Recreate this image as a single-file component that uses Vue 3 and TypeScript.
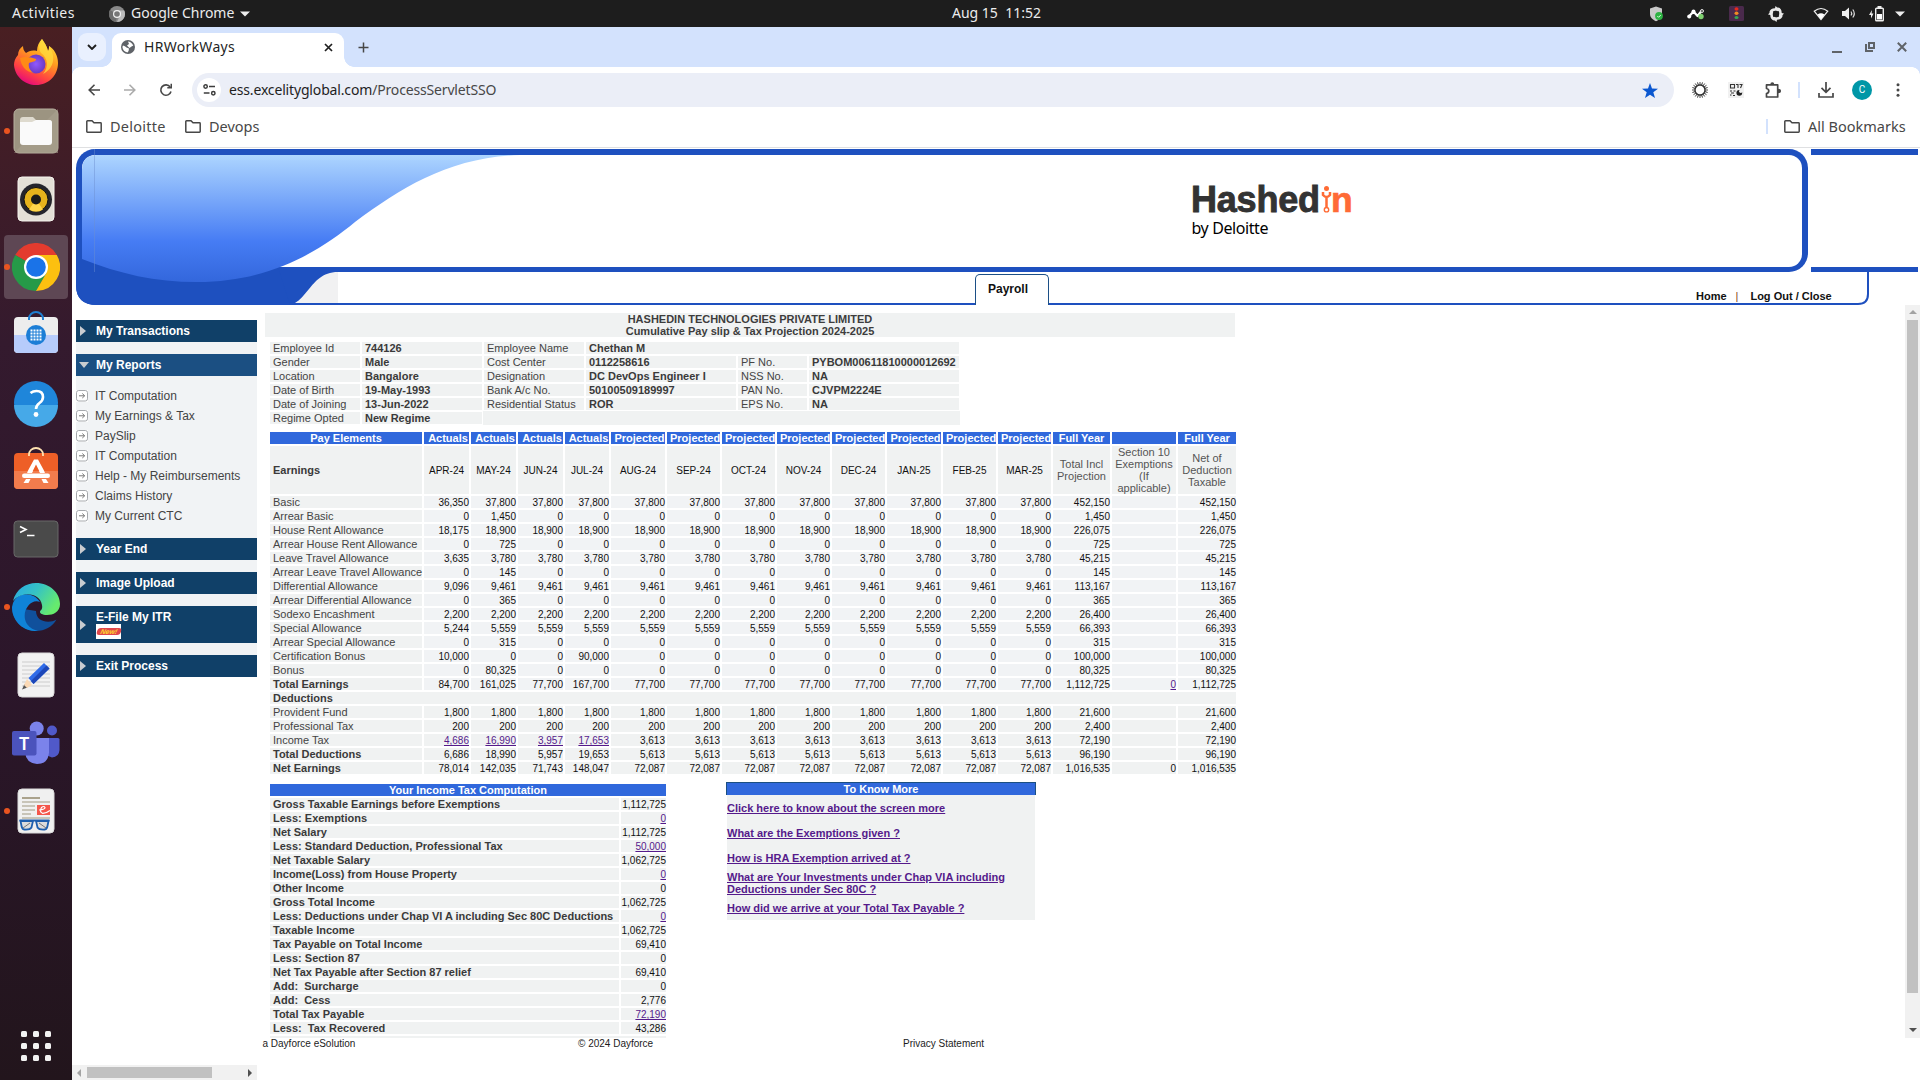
<script setup lang="ts">
interface PayRow {
  label: string
  actuals: number[]
  projected: number
  total: number
  exempt?: number
  bold?: boolean
  linkActuals?: boolean
  linkExempt?: boolean
}
interface TaxRow {
  label: string
  value: number
  link?: boolean
}

const fmt = (n: number): string => n.toLocaleString('en-US')

const months: string[] = [
  'APR-24', 'MAY-24', 'JUN-24', 'JUL-24', 'AUG-24', 'SEP-24',
  'OCT-24', 'NOV-24', 'DEC-24', 'JAN-25', 'FEB-25', 'MAR-25',
]

const earnings: PayRow[] = [
  { label: 'Basic', actuals: [36350, 37800, 37800, 37800], projected: 37800, total: 452150 },
  { label: 'Arrear Basic', actuals: [0, 1450, 0, 0], projected: 0, total: 1450 },
  { label: 'House Rent Allowance', actuals: [18175, 18900, 18900, 18900], projected: 18900, total: 226075 },
  { label: 'Arrear House Rent Allowance', actuals: [0, 725, 0, 0], projected: 0, total: 725 },
  { label: 'Leave Travel Allowance', actuals: [3635, 3780, 3780, 3780], projected: 3780, total: 45215 },
  { label: 'Arrear Leave Travel Allowance', actuals: [0, 145, 0, 0], projected: 0, total: 145 },
  { label: 'Differential Allowance', actuals: [9096, 9461, 9461, 9461], projected: 9461, total: 113167 },
  { label: 'Arrear Differential Allowance', actuals: [0, 365, 0, 0], projected: 0, total: 365 },
  { label: 'Sodexo Encashment', actuals: [2200, 2200, 2200, 2200], projected: 2200, total: 26400 },
  { label: 'Special Allowance', actuals: [5244, 5559, 5559, 5559], projected: 5559, total: 66393 },
  { label: 'Arrear Special Allowance', actuals: [0, 315, 0, 0], projected: 0, total: 315 },
  { label: 'Certification Bonus', actuals: [10000, 0, 0, 90000], projected: 0, total: 100000 },
  { label: 'Bonus', actuals: [0, 80325, 0, 0], projected: 0, total: 80325 },
  { label: 'Total Earnings', actuals: [84700, 161025, 77700, 167700], projected: 77700, total: 1112725, exempt: 0, bold: true, linkExempt: true },
]

const deductions: PayRow[] = [
  { label: 'Provident Fund', actuals: [1800, 1800, 1800, 1800], projected: 1800, total: 21600 },
  { label: 'Professional Tax', actuals: [200, 200, 200, 200], projected: 200, total: 2400 },
  { label: 'Income Tax', actuals: [4686, 16990, 3957, 17653], projected: 3613, total: 72190, linkActuals: true },
  { label: 'Total Deductions', actuals: [6686, 18990, 5957, 19653], projected: 5613, total: 96190, bold: true },
  { label: 'Net Earnings', actuals: [78014, 142035, 71743, 148047], projected: 72087, total: 1016535, exempt: 0, bold: true },
]

const taxRows: TaxRow[] = [
  { label: 'Gross Taxable Earnings before Exemptions', value: 1112725 },
  { label: 'Less: Exemptions', value: 0, link: true },
  { label: 'Net Salary', value: 1112725 },
  { label: 'Less: Standard Deduction, Professional Tax', value: 50000, link: true },
  { label: 'Net Taxable Salary', value: 1062725 },
  { label: 'Income(Loss) from House Property', value: 0, link: true },
  { label: 'Other Income', value: 0 },
  { label: 'Gross Total Income', value: 1062725 },
  { label: 'Less: Deductions under Chap VI A including Sec 80C Deductions', value: 0, link: true },
  { label: 'Taxable Income', value: 1062725 },
  { label: 'Tax Payable on Total Income', value: 69410 },
  { label: 'Less: Section 87', value: 0 },
  { label: 'Net Tax Payable after Section 87 relief', value: 69410 },
  { label: 'Add:\u00a0 Surcharge', value: 0 },
  { label: 'Add:\u00a0 Cess', value: 2776 },
  { label: 'Total Tax Payable', value: 72190, link: true },
  { label: 'Less:\u00a0 Tax Recovered', value: 43286 },
]

const reports: string[] = [
  'IT Computation', 'My Earnings & Tax', 'PaySlip', 'IT Computation',
  'Help - My Reimbursements', 'Claims History', 'My Current CTC',
]

const infoRows: string[][] = [
  ['Gender', 'Male', 'Cost Center', '0112258616', 'PF No.', 'PYBOM00611810000012692'],
  ['Location', 'Bangalore', 'Designation', 'DC DevOps Engineer I', 'NSS No.', 'NA'],
  ['Date of Birth', '19-May-1993', 'Bank A/c No.', '50100509189997', 'PAN No.', 'CJVPM2224E'],
  ['Date of Joining', '13-Jun-2022', 'Residential Status', 'ROR', 'EPS No.', 'NA'],
]

const helpLinks: string[] = [
  'Click here to know about the screen more',
  'What are the Exemptions given ?',
  'How is HRA Exemption arrived at ?',
  'What are Your Investments under Chap VIA including Deductions under Sec 80C ?',
  'How did we arrive at your Total Tax Payable ?',
]

const rays: number[] = Array.from({ length: 20 }, (_, i) => i * 18)
</script>

<template>
  <div class="desktop">
    <!-- system bar -->
    <div class="topbar">
      <span class="ui activities">Activities</span>
      <svg class="tb-chrome" width="16" height="16" viewBox="0 0 16 16">
        <circle cx="8" cy="8" r="8" fill="#8a8a8a" />
        <path d="M8 8L1 4A8 8 0 0 0 7 16Z" fill="#6d6d6d" />
        <path d="M8 4.5H15.2A8 8 0 0 1 8 16L11 9.500Z" fill="#b9b9b9" />
        <circle cx="8" cy="8" r="4" fill="#f2f2f2" />
        <circle cx="8" cy="8" r="2.800" fill="#777" />
      </svg>
      <span class="ui appname">Google Chrome</span>
      <svg class="caret" width="10" height="6" viewBox="0 0 10 6"><path d="M0 .5H10L5 5.500Z" fill="#eee" /></svg>
      <span class="ui clock">Aug 15&nbsp; 11:52</span>
      <div class="tray">
        <svg width="14" height="16" viewBox="0 0 14 16">
          <path d="M7 .5L13 2.500V8C13 11.500 10 14 7 15.200C4 14 1 11.500 1 8V2.500Z" fill="#c9c9c9" />
          <circle cx="10" cy="10" r="3.900" fill="#2fb344" /><path d="M8.300 10L9.600 11.300L11.800 9" stroke="#d8ffdc" fill="none" />
        </svg>
        <svg class="t2" width="18" height="12" viewBox="0 0 18 12">
          <path d="M2 8.500L6.500 3.500L10.500 8L14.500 3" stroke="#fff" stroke-width="2.200" fill="none" stroke-linecap="round" stroke-linejoin="round" />
          <circle cx="2.200" cy="8.500" r="2" fill="#fff" /><circle cx="6.500" cy="3.500" r="2" fill="#fff" /><circle cx="15" cy="3" r="1.500" fill="#444" stroke="#ddd" />
          <circle cx="14" cy="8.500" r="2.700" fill="#7fd070" />
        </svg>
        <svg class="t3" width="15" height="15" viewBox="0 0 15 15">
          <rect width="15" height="15" rx="1.500" fill="#4a2a4c" />
          <ellipse cx="7.500" cy="3" rx="2" ry="1.700" fill="#e8291c" /><ellipse cx="7.500" cy="7.300" rx="2" ry="1.700" fill="#f08a24" /><ellipse cx="7.500" cy="11.500" rx="2" ry="1.600" fill="#36a852" />
        </svg>
        <svg class="t4" width="16" height="16" viewBox="0 0 16 16" fill="#e8e8e8">
          <path v-for="a in [0, 90, 180, 270]" :key="a" d="M1.200 6.500Q2.500 2.200 7 2.300L7.500 0L12 4L8 7L7.600 4.800Q5 4.600 4 6.500Z" :transform="`rotate(${a} 8 8)`" />
          <circle cx="8" cy="8" r="3.200" fill="#1d1d1d" />
        </svg>
        <svg class="t5" width="16" height="14" viewBox="0 0 16 14">
          <path d="M1.200 4.200Q8-1.200 14.800 4.200L8 12.500Z" fill="none" stroke="#eee" stroke-width="1.200" /><path d="M4.500 7.500Q8 5.200 11.500 7.500L8 12.500Z" fill="#fff" />
        </svg>
        <svg class="t6" width="15" height="13" viewBox="0 0 15 13">
          <path d="M0 4H3L7 .5V12.500L3 9H0Z" fill="#eee" /><path d="M9 4.500Q10.500 6.500 9 8.500M10.800 2.500Q13.800 6.500 10.800 10.500" fill="none" stroke="#ddd" stroke-width="1.200" />
        </svg>
        <svg class="t7" width="15" height="16" viewBox="0 0 15 16">
          <path d="M3 4L0 9H2V12.500L4.500 7.500H2.600Z" fill="#eee" /><rect x="6.700" y="2.200" width="7.600" height="12.600" rx=".8" fill="none" stroke="#eee" stroke-width="1.400" /><rect x="8.500" y="0" width="4" height="2" fill="#eee" /><rect x="8" y="8" width="5" height="5.500" fill="#fff" />
        </svg>
        <svg class="t8" width="10" height="6" viewBox="0 0 10 6"><path d="M0 .5H10L5 5.500Z" fill="#eee" /></svg>
      </div>
    </div>

    <div class="workspace">
      <!-- dock -->
      <div class="dock">
        <div class="dk">
          <svg width="48" height="48" viewBox="0 0 48 48">
            <defs>
              <linearGradient id="ff" x1=".8" y1="0" x2=".3" y2="1"><stop offset="0" stop-color="#ffe93e" /><stop offset=".4" stop-color="#ff9a1f" /><stop offset=".75" stop-color="#ff4143" /><stop offset="1" stop-color="#e3067f" /></linearGradient>
              <radialGradient id="ffp"><stop offset="0" stop-color="#9059ff" /><stop offset="1" stop-color="#6b3ac4" /></radialGradient>
            </defs>
            <path d="M30 0C27 3 25 7 25 12C20 11 17 12 14 14C12 12 11 10 11 7C8 9 6 12 6 16C3 19 2 23 2 26C3 38 13 46 24 46C37 46 46 36 46 24C46 16 42 10 37 7C37 9 37 11 36 12C35 7 32 3 30 0Z" fill="url(#ff)" />
            <circle cx="24" cy="25" r="9.500" fill="url(#ffp)" />
            <path d="M8 19C13 17 19 18 24 20C25 22 20 23 17 24C16 28 18 32 22 34C13 33 9 26 8 19Z" fill="#ff8a16" />
            <path d="M30 0C27 4 26 9 29 14C36 19 37 28 31 35C41 30 45 19 37 7C37 9 37 11 36 12C35 7 32 3 30 0Z" fill="#ffdc3e" opacity=".75" />
          </svg>
        </div>
        <div class="dk on">
          <svg width="48" height="48" viewBox="0 0 48 48">
            <rect x="2" y="2" width="44" height="44" rx="5" fill="#9c9481" stroke="#b7b09f" /><path d="M46 2V46H2Z" fill="#aaa28f" opacity=".6" />
            <path d="M8 13Q8 10 11 10H21L24 13H37Q40 13 40 16V24H8Z" fill="#dedace" /><rect x="8" y="15" width="32" height="23" rx="3" fill="#fafafa" /><path d="M8 15H20L24 13H37Q40 13 40 16V20H8Z" fill="#fafafa" />
          </svg>
        </div>
        <div class="dk">
          <svg width="48" height="48" viewBox="0 0 48 48">
            <rect x="6" y="2" width="36" height="44" rx="4" fill="#e4e0d7" stroke="#f5f3ee" /><circle cx="24" cy="24.500" r="16" fill="#25252c" /><circle cx="24" cy="24.500" r="12" fill="#e6b31c" stroke="#111" /><path d="M24 24.500L17 34.500A12 12 0 0 0 31 34.500Z" fill="#ffd54a" /><circle cx="24" cy="24.500" r="5" fill="#1b1b1b" />
          </svg>
        </div>
        <div class="dk on active">
          <svg width="48" height="48" viewBox="0 0 48 48">
            <path d="M24 24L3.200 12A24 24 0 0 1 44.800 12Z" fill="#e33b2e" /><path d="M24 24L3.200 12A24 24 0 0 0 24 48L34.400 30Z" fill="#269a48" /><path d="M24 12H44.800A24 24 0 0 1 24 48L34.400 30Z" fill="#fcc010" />
            <circle cx="24" cy="24" r="12" fill="#fff" /><circle cx="24" cy="24" r="9.800" fill="#1a73e8" />
          </svg>
        </div>
        <div class="dk">
          <svg width="48" height="48" viewBox="0 0 48 48">
            <rect x="2" y="6" width="44" height="36" rx="4" fill="#ededed" /><path d="M2 24H46V38Q46 42 42 42H6Q2 42 2 38Z" fill="#b7ccfb" />
            <path d="M17 9V7.500A7 6.500 0 0 1 31 7.500V9" stroke="#1f7fd1" stroke-width="2" fill="none" /><circle cx="24" cy="24" r="10" fill="#1c7ed6" />
            <g fill="#fff"><rect v-for="n in 16" :key="n" :x="18.500 + ((n - 1) % 4) * 3" :y="18.500 + Math.floor((n - 1) / 4) * 3" width="2" height="2" /></g>
          </svg>
        </div>
        <div class="dk">
          <svg width="48" height="48" viewBox="0 0 48 48">
            <circle cx="24" cy="24" r="22" fill="#1f86da" /><path d="M2 26A22 22 0 0 0 46 26Z" fill="#46a9e8" /><path d="M18.500 14Q21 12 24.500 12Q31 12 31 18Q31 21.500 27.500 24Q24 26.500 24 30" stroke="#fff" stroke-width="2.600" fill="none" /><circle cx="24" cy="35.500" r="2.400" fill="#fff" />
          </svg>
        </div>
        <div class="dk">
          <svg width="48" height="48" viewBox="0 0 48 48">
            <rect x="2" y="6" width="44" height="36" rx="4" fill="#ee5f27" /><path d="M2 24H46V38Q46 42 42 42H6Q2 42 2 38Z" fill="#f27c4d" />
            <path d="M17 9V7.500A7 6.500 0 0 1 31 7.500V9" stroke="#ffe2b0" stroke-width="1.800" fill="none" />
            <path d="M15.500 24.500L22 12.500H26L32.500 24.500H27.500L24 17.500L20.500 24.500Z" fill="#fff" />
            <rect x="10" y="26.500" width="28" height="4.500" rx="2.200" fill="#fff" />
            <path d="M16 24H21L20 26H15ZM27 24H32L33 26H28ZM14 32H18.500L16.500 36H11.500ZM29.500 32H34L36.500 36H31.500Z" fill="#fff" />
          </svg>
        </div>
        <div class="dk">
          <svg width="48" height="48" viewBox="0 0 48 48">
            <rect x="2" y="6" width="44" height="36" rx="3.500" fill="#4a4a4a" stroke="#696969" /><path d="M8 11.500L14 14.500L8 17.500M15 20.500H22.500" stroke="#fff" stroke-width="1.600" fill="none" />
          </svg>
        </div>
        <div class="dk on">
          <svg width="48" height="48" viewBox="0 0 48 48">
            <defs><linearGradient id="eg" x1="0" x2="1" y2=".5"><stop offset="0" stop-color="#28a8e8" /><stop offset=".5" stop-color="#36c3c3" /><stop offset="1" stop-color="#66eb6e" /></linearGradient></defs>
            <path d="M0 24A24 24 0 0 0 24 48C33 48 40 44 44.500 36.500C37 41 24 39 24 28Z" fill="#10509c" />
            <path d="M1 20C6 8 22 9 28 19C18 15 8 30 15 41C18 45 22 47 26 48C11 49 0 38 0 24Z" fill="#0f83d8" />
            <path d="M1 18C4 6 14 0 24 0C38 0 48 10 48 21C48 29 41 32 35 32C30 32 28 30 28 29C28 27 31 27 30 22C28 9 9 8 1 18Z" fill="url(#eg)" />
          </svg>
        </div>
        <div class="dk">
          <svg width="48" height="48" viewBox="0 0 48 48">
            <rect x="6" y="2" width="36" height="44" rx="4" fill="#f2f2f2" stroke="#dadada" /><path d="M10 11H38M10 15H38M10 19H38M10 23H38M10 27H38M10 31H38M10 35H38" stroke="#ccc" />
            <path d="M12.500 33L10 38.500L15.500 36.500Z" fill="#555" /><path d="M15 28L20 34L15 37L12 34Z" fill="#fbd9b5" /><path d="M16.500 27L32 12L37.500 17.500L21.500 33Z" fill="#2f6be8" /><path d="M34.500 14.500L19 30L21.500 33L37.500 17.500Z" fill="#1d47b8" />
          </svg>
        </div>
        <div class="dk">
          <svg width="48" height="48" viewBox="0 0 48 48">
            <circle cx="40" cy="11.500" r="5" fill="#5059c9" /><path d="M37 19H46Q47.500 19 47.500 20.500V31Q47 38 40 38.500L35 36.500Z" fill="#5059c9" /><circle cx="24.700" cy="9.500" r="7" fill="#7b83eb" />
            <path d="M14 19H37V33.500Q36 45 25 45Q14 44 13 33.500Z" fill="#7b83eb" /><rect x="0" y="12" width="24.500" height="24.500" rx="2" fill="#4b53bc" />
            <text x="12.200" y="30.500" text-anchor="middle" font-family="Noto Sans, sans-serif" font-weight="600" font-size="18" fill="#fff">T</text>
          </svg>
        </div>
        <div class="dk on">
          <svg width="48" height="48" viewBox="0 0 48 48">
            <rect x="6" y="2" width="36" height="44" rx="4" fill="#f0f0f0" stroke="#dadada" /><path d="M10 11H28" stroke="#aaa28c" stroke-width="2" /><path d="M10 15H38M10 19H23M10 23H23M10 27H19M10 31H38" stroke="#c8c4b8" stroke-width="2" />
            <rect x="25" y="18" width="13" height="10" fill="#f5564a" /><path d="M27 23Q33 22.500 33 20.500Q32 18.500 29.500 20.500Q27 25 30.500 26.300Q34 26.500 38 23.500" stroke="#fff" stroke-width="1.200" fill="none" />
            <path d="M8.500 34H21L19.500 40.500Q18 43 12 42.500Q10 42 9.500 39ZM24 34H36.500L35.500 39Q35 42 33 42.500Q27 43 25.500 40.500Z" stroke="#1e5fae" stroke-width="1.800" fill="#dcdcdc" /><path d="M7.500 33.500H37.500" stroke="#1e5fae" stroke-width="2" /><path d="M11 41L18 36M27 36L34 41" stroke="#777" />
          </svg>
        </div>
        <div class="apps"><i v-for="n in 9" :key="n" /></div>
      </div>

      <div class="browser">
        <!-- tab strip -->
        <div class="tabs">
          <div class="tabsearch"><svg width="10" height="6" viewBox="0 0 10 6"><path d="M1 1L5 5L9 1" stroke="#1f1f1f" stroke-width="1.900" fill="none" /></svg></div>
          <div class="tab">
            <svg width="14" height="14" viewBox="0 0 14 14"><circle cx="7" cy="7" r="7" fill="#5f6368" /><path d="M2 5.500Q4 6 5.500 7.500L8 8.500Q8 11 6.500 12.500Q2 11.500 1.400 7ZM7 1.400Q10 1.500 12.300 5.500L10.500 6.500L8.500 8L6 5.500L8 4Z" fill="#fff" /></svg>
            <span class="ui tabname">HRWorkWays</span>
            <svg class="x" width="9" height="9" viewBox="0 0 9 9"><path d="M1 1L8 8M8 1L1 8" stroke="#1f1f1f" stroke-width="1.700" /></svg>
          </div>
          <svg class="plus" width="11" height="11" viewBox="0 0 11 11"><path d="M5.500 .5V10.500M.5 5.500H10.500" stroke="#474747" stroke-width="1.500" /></svg>
          <div class="wins">
            <svg width="10" height="11" viewBox="0 0 10 11"><path d="M0 10H10" stroke="#5f6368" stroke-width="2" /></svg>
            <svg width="10" height="10" viewBox="0 0 10 10"><path d="M4 1H9V6H4Z" fill="none" stroke="#5f6368" stroke-width="2" /><path d="M1 2V9H8" fill="none" stroke="#5f6368" stroke-width="2" /></svg>
            <svg width="10" height="10" viewBox="0 0 10 10"><path d="M.8 .8L9.200 9.200M9.200 .8L.8 9.200" stroke="#5f6368" stroke-width="2" /></svg>
          </div>
        </div>

        <!-- toolbar -->
        <div class="toolbar">
          <svg class="nav" width="12" height="12" viewBox="0 0 12 12"><path d="M12 6H1.500M6.500 .7L1.200 6L6.500 11.300" stroke="#474747" stroke-width="1.600" fill="none" /></svg>
          <svg class="nav n2" width="12" height="12" viewBox="0 0 12 12"><path d="M0 6H10.500M5.500 .7L10.800 6L5.500 11.300" stroke="#ababab" stroke-width="1.600" fill="none" /></svg>
          <svg class="nav n3" width="14" height="14" viewBox="0 0 14 14"><path d="M11.200 4A5.200 5.200 0 1 0 12 8.500" stroke="#474747" stroke-width="1.600" fill="none" /><path d="M13 .8V5.500H8.300V4H11.500V.8Z" fill="#474747" /></svg>
          <div class="omni">
            <div class="site"><svg width="13" height="12" viewBox="0 0 13 12" fill="none" stroke="#3c3c3c" stroke-width="1.500"><circle cx="2.600" cy="2.500" r="1.700" /><path d="M6 2.500H12M.8 9H6.500" /><circle cx="10.300" cy="9.200" r="1.700" /></svg></div>
            <span class="ui url">ess.excelityglobal.com<em>/ProcessServletSSO</em></span>
            <svg class="star" width="16" height="15" viewBox="0 0 16 15"><path d="M8 0L10 5.400L16 5.700L11.300 9.300L13 15L8 11.700L3 15L4.700 9.300L0 5.700L6 5.400Z" fill="#0b57d0" /></svg>
          </div>
          <div class="exts">
            <svg width="16" height="16" viewBox="0 0 16 16"><circle cx="8" cy="8" r="5" fill="none" stroke="#333" stroke-width="1.400" /><path v-for="a in rays" :key="a" d="M8 0V3" stroke="#333" stroke-width=".9" :transform="`rotate(${a} 8 8)`" /></svg>
            <svg class="e2" width="16" height="16" viewBox="0 0 16 16"><rect width="16" height="16" fill="#f1f1f1" /><path d="M2.500 2.500H6.500V6H2.500ZM8 2.500H10V6M11.500 2.500H14L12.500 6M2 9H4M5.500 9H7.500M3 11H6M2 13H3.500M5 13.500H7" fill="none" stroke="#333" stroke-width="1.100" /><circle cx="11.300" cy="10.800" r="2.900" fill="#222" /><circle cx="12.800" cy="9.300" r="1.700" fill="#f1f1f1" /></svg>
            <svg class="e3" width="17" height="17" viewBox="0 0 17 17"><path d="M1.500 2.800H5.500H12.700V15H1.500V11.500Q3.800 11 3.800 9Q3.800 7 1.500 6.500Z" fill="none" stroke="#474747" stroke-width="1.700" stroke-linejoin="round" /><path d="M5.300 2.500Q5.300 .3 7.300 .3Q9.300 .3 9.300 2.500ZM13 6.800Q16 6.800 16 9Q16 11.200 13 11.200Z" fill="#474747" /></svg>
            <i class="sep" />
            <svg class="e4" width="16" height="16" viewBox="0 0 16 16"><path d="M8 0V10M3.500 5.800L8 10.300L12.500 5.800M1 11V15H15V11" fill="none" stroke="#474747" stroke-width="1.700" /></svg>
            <div class="avatar">C</div>
            <svg class="e5" width="4" height="14" viewBox="0 0 4 14" fill="#474747"><circle cx="2" cy="1.700" r="1.500" /><circle cx="2" cy="7" r="1.500" /><circle cx="2" cy="12.300" r="1.500" /></svg>
          </div>
        </div>

        <div class="bookmarks">
          <svg class="fold" width="16" height="13" viewBox="0 0 16 13"><path d="M.8 1.500Q.8 .8 1.500 .8H6L8 2.800H14.500Q15.200 2.800 15.200 3.500V11.500Q15.200 12.200 14.500 12.200H1.500Q.8 12.200 .8 11.500Z" fill="none" stroke="#474747" stroke-width="1.500" /></svg>
          <span class="ui bm b1">Deloitte</span>
          <svg class="fold" width="16" height="13" viewBox="0 0 16 13"><path d="M.8 1.500Q.8 .8 1.500 .8H6L8 2.800H14.500Q15.200 2.800 15.200 3.500V11.500Q15.200 12.200 14.500 12.200H1.500Q.8 12.200 .8 11.500Z" fill="none" stroke="#474747" stroke-width="1.500" /></svg>
          <span class="ui bm b2">Devops</span>
          <i class="sep allsep" />
          <svg class="fold" width="16" height="13" viewBox="0 0 16 13"><path d="M.8 1.500Q.8 .8 1.500 .8H6L8 2.800H14.500Q15.200 2.800 15.200 3.500V11.500Q15.200 12.200 14.500 12.200H1.500Q.8 12.200 .8 11.500Z" fill="none" stroke="#474747" stroke-width="1.500" /></svg>
          <span class="ui bm b3">All Bookmarks</span>
        </div>

        <!-- site banner -->
        <div class="banner">
          <svg class="art" width="1848" height="157" viewBox="72 148 1848 157">
            <defs><linearGradient id="wave" gradientUnits="userSpaceOnUse" x1="0" y1="155" x2="0" y2="282"><stop offset="0" stop-color="#add5ff" /><stop offset=".68" stop-color="#467cf4" /><stop offset="1" stop-color="#3367dc" /></linearGradient></defs>
            <rect x="290" y="272" width="48" height="31" fill="#f1f1f2" />
            <path d="M76 240V285Q76 305 97 305H300V303H295C300 300 304 295 309 289C315 282 322 272 338 272V267H82Z" fill="#1e50bf" />
            <rect x="76" y="149" width="1732" height="123" rx="19" fill="#1e50bf" />
            <rect x="82" y="155" width="1720" height="112" rx="13" fill="#fff" />
            <path d="M76 240V285Q76 305 97 305H290L278 267L200 272L82 256V240Z" fill="#1e50bf" />
            <path d="M82 259V170Q82 155 97 155H520C450 157 402 187 355 222C320 251 270 282 197 282C155 282 120 274 82 259Z" fill="url(#wave)" />
            <path d="M94.500 149V272" stroke="#6d8fd0" opacity=".45" />
            <path d="M1811 152H1918" stroke="#1e50bf" stroke-width="6" />
            <path d="M1811 269.500H1918" stroke="#1e50bf" stroke-width="5" />
            <path d="M290 304H1858Q1868 304 1868 294V272" fill="none" stroke="#1e50bf" stroke-width="2" />
            <text x="1191" y="212" textLength="129" font-family="Liberation Sans, Arial, sans-serif" font-weight="700" font-size="36" fill="#333" stroke="#333" stroke-width=".9">Hashed</text>
            <circle cx="1326.500" cy="188.500" r="2.500" fill="#ff6b35" />
            <path d="M1323 192V195Q1326.500 199 1330 195V192M1326.500 197V207" stroke="#ff6b35" stroke-width="2.500" fill="none" /><circle cx="1326.500" cy="209.700" r="2.200" stroke="#ff6b35" stroke-width="1.400" fill="none" />
            <text x="1331" y="212" font-family="Liberation Sans, Arial, sans-serif" font-weight="700" font-size="35.500" fill="#ff6b35" stroke="#ff6b35" stroke-width=".7">n</text>
            <text x="1191.500" y="234" textLength="77" font-family="Noto Sans, sans-serif" font-size="16" fill="#000">by Deloitte</text>
          </svg>
          <div class="menu">
            <div class="mtab">Payroll</div>
            <div class="mlinks"><span>Home</span><i>|</i><span>Log Out / Close</span></div>
          </div>
        </div>

        <div class="page">
          <!-- left navigation -->
          <div class="left">
            <div class="nav-list">
              <div class="nitem"><i class="arr" />My Transactions</div>
              <div class="nitem open"><i class="arr down" />My Reports</div>
              <div class="sub">
                <div v-for="(r, i) in reports" :key="i" class="srow">
                  <svg width="12" height="12" viewBox="0 0 12 12"><rect width="12" height="12" fill="#fff" /><rect x=".5" y=".5" width="11" height="10.500" rx="2.200" fill="#fff" stroke="#a5a8ac" /><path d="M3 5.800H8.500M6.300 3.500L8.700 5.800L6.300 8" fill="none" stroke="#777" /></svg>
                  {{ r }}
                </div>
              </div>
              <div class="nitem"><i class="arr" />Year End</div>
              <div class="nitem"><i class="arr" />Image Upload</div>
              <div class="nitem tall"><i class="arr" /><div>E-File My ITR<span class="new"><b>New!</b></span></div></div>
              <div class="nitem last"><i class="arr" />Exit Process</div>
            </div>
            <div class="hscroll"><i class="al" /><i class="thumb" /><i class="ar" /></div>
          </div>

          <div class="right">
            <div class="frame">
              <div class="content">
                <div class="title">HASHEDIN TECHNOLOGIES PRIVATE LIMITED<br>Cumulative Pay slip &amp; Tax Projection 2024-2025</div>

                <div class="info">
                  <span>Employee Id</span><b>744126</b><span>Employee Name</span><b class="span3">Chethan M</b>
                  <template v-for="(r, i) in infoRows" :key="i">
                    <span>{{ r[0] }}</span><b>{{ r[1] }}</b><span>{{ r[2] }}</span><b>{{ r[3] }}</b><span>{{ r[4] }}</span><b>{{ r[5] }}</b>
                  </template>
                  <span>Regime Opted</span><b>New Regime</b><span class="rest" />
                </div>

                <div class="pay">
                  <div class="h">Pay Elements</div>
                  <div v-for="n in 4" :key="'a' + n" class="h pl">Actuals</div>
                  <div v-for="n in 8" :key="'p' + n" class="h pl">Projected</div>
                  <div class="h">Full Year</div><div class="h" /><div class="h">Full Year</div>

                  <div class="lab bold mid">Earnings</div>
                  <div v-for="m in months" :key="m" class="mon">{{ m }}</div>
                  <div class="cap">Total Incl Projection</div>
                  <div class="cap">Section 10 Exemptions (If applicable)</div>
                  <div class="cap">Net of Deduction Taxable</div>

                  <template v-for="row in earnings" :key="row.label">
                    <div class="lab" :class="{ bold: row.bold }">{{ row.label }}</div>
                    <div v-for="(v, i) in row.actuals" :key="i" class="num e">{{ fmt(v) }}</div>
                    <div v-for="n in 8" :key="'p' + n" class="num e">{{ fmt(row.projected) }}</div>
                    <div class="num e">{{ fmt(row.total) }}</div>
                    <div class="num e"><u v-if="row.linkExempt">{{ row.exempt }}</u></div>
                    <div class="num e">{{ fmt(row.total) }}</div>
                  </template>
                  <div class="lab bold full">Deductions</div>
                  <template v-for="row in deductions" :key="row.label">
                    <div class="lab" :class="{ bold: row.bold }">{{ row.label }}</div>
                    <div v-for="(v, i) in row.actuals" :key="i" class="num"><u v-if="row.linkActuals">{{ fmt(v) }}</u><template v-else>{{ fmt(v) }}</template></div>
                    <div v-for="n in 8" :key="'p' + n" class="num">{{ fmt(row.projected) }}</div>
                    <div class="num">{{ fmt(row.total) }}</div>
                    <div class="num">{{ row.exempt }}</div>
                    <div class="num">{{ fmt(row.total) }}</div>
                  </template>
                </div>

                <div class="lower">
                  <div class="tax">
                    <div class="h full">Your Income Tax Computation</div>
                    <template v-for="t in taxRows" :key="t.label">
                      <div class="lab bold">{{ t.label }}</div>
                      <div class="num"><u v-if="t.link">{{ fmt(t.value) }}</u><template v-else>{{ fmt(t.value) }}</template></div>
                    </template>
                    <div class="lab full" />
                  </div>
                  <div class="know">
                    <div class="kh">To Know More</div>
                    <div class="kb"><div v-for="l in helpLinks" :key="l"><a>{{ l }}</a></div></div>
                  </div>
                </div>
              </div>
              <div class="vscroll"><i class="up" /><i class="thumb" /><i class="dn" /></div>
            </div>
            <div class="foot"><span class="f1">a Dayforce eSolution</span><span class="f2">© 2024 Dayforce</span><span>Privacy Statement</span></div>
          </div>
        </div>
      </div>
    </div>
  </div>
</template>

<style>
body { margin: 0; overflow: hidden; }
</style>

<style scoped>
* { box-sizing: border-box; }
svg { display: block; flex: none; }
i, em { font-style: normal; }
.desktop { width: 1920px; height: 1080px; display: flex; flex-direction: column; background: #fff; font-family: "Liberation Sans", Arial, sans-serif; overflow: hidden; }
.ui { font-family: "Noto Sans", sans-serif; white-space: nowrap; padding-bottom: 2px; }

.topbar { height: 27px; flex: none; background: #1d1d1d; color: #ececec; display: flex; align-items: center; font-size: 14px; position: relative; }
.activities { margin-left: 12px; width: 97px; letter-spacing: .45px; }
.appname { margin-left: 6px; width: 105px; }
.caret { margin-left: 4px; }
.clock { position: absolute; left: 952px; }
.tray { margin-left: auto; display: flex; align-items: center; padding-right: 15px; }
.t2 { margin-left: 24px; }
.t3 { margin-left: 24px; }
.t4 { margin-left: 24px; }
.t5 { margin-left: 29px; }
.t6 { margin-left: 13px; }
.t7 { margin-left: 12px; }
.t8 { margin-left: 11px; }

.workspace { flex: 1; display: flex; min-height: 0; }
.dock { width: 72px; flex: none; background: linear-gradient(#491f22, #341a2e 30%, #2b162a 62%, #22151c); display: flex; flex-direction: column; padding-top: 2px; }
.dk { height: 68px; display: flex; align-items: center; justify-content: center; position: relative; flex: none; }
.dk.on::before { content: ""; position: absolute; left: 4px; top: 31px; width: 6px; height: 6px; border-radius: 50%; background: #e95420; }
.dk.active { height: 64px; margin: 2px 4px; border-radius: 4px; background: #5e4754; }
.dk.active::before { left: 0; top: 29px; }
.apps { margin: auto auto 19px; display: grid; grid-template-columns: repeat(3, 6px); gap: 6px; }
.apps i { height: 6px; border-radius: 1.500px; background: #f2f2f2; }

.browser { flex: 1; display: flex; flex-direction: column; min-width: 0; }
.tabs { height: 40px; background: #d3e2fd; display: flex; padding: 6px 0 0 6px; flex: none; }
.tabsearch { width: 28px; height: 28px; border-radius: 9px; background: #e9f0fe; display: flex; align-items: center; justify-content: center; }
.tab { position: relative; margin-left: 6px; width: 232px; height: 34px; background: #fff; border-radius: 9px 9px 0 0; display: flex; align-items: center; padding: 0 11px 6px 9px; }
.tab::before, .tab::after { content: ""; position: absolute; bottom: 0; width: 10px; height: 10px; }
.tab::before { left: -10px; background: radial-gradient(circle at 0 0, transparent 9.500px, #fff 10px); }
.tab::after { right: -10px; background: radial-gradient(circle at 100% 0, transparent 9.500px, #fff 10px); }
.tabname { margin-left: 9px; font-size: 14px; color: #1f1f1f; letter-spacing: .3px; }
.x { margin-left: auto; }
.plus { margin: 9px 0 0 14px; }
.wins { margin-left: auto; display: flex; gap: 22.500px; padding: 9px 13px 0 0; align-items: flex-start; }

.toolbar { height: 46px; flex: none; display: flex; align-items: center; padding-left: 16px; background: radial-gradient(circle at 8px 8px, #fff 7.500px, #d3e2fd 8px) 0 0 / 8px 8px no-repeat, radial-gradient(circle at 0 8px, #fff 7.500px, #d3e2fd 8px) 100% 0 / 8px 8px no-repeat, #fff; }
.n2 { margin-left: 24px; }
.n3 { margin-left: 23px; }
.omni { margin-left: 19px; width: 1482px; height: 34px; border-radius: 17px; background: #ebeef7; display: flex; align-items: center; padding: 0 16px 0 5px; }
.site { width: 24px; height: 24px; border-radius: 50%; background: #fff; display: flex; align-items: center; justify-content: center; }
.url { margin-left: 8px; font-size: 14px; color: #1f1f1f; letter-spacing: -.16px; }
.url em { color: #474747; }
.star { margin-left: auto; }
.exts { display: flex; align-items: center; padding-left: 18px; }
.e2 { margin-left: 20px; }
.e3 { margin-left: 21px; }
.sep { width: 2px; height: 16px; background: #d3e2fd; margin-left: 16px; }
.e4 { margin-left: 18px; }
.avatar { width: 20px; height: 20px; border-radius: 50%; background: #0097a7; color: #fff; font: 10px/20px Roboto, sans-serif; text-align: center; margin-left: 18px; }
.e5 { margin-left: 24px; }

.bookmarks { height: 35px; flex: none; border-bottom: 1px solid #dfe0e2; display: flex; align-items: center; padding: 0 0 7px 14px; background: #fff; }
.bm { font-size: 14.500px; color: #474747; margin-left: 8px; }
.b1 { width: 75px; letter-spacing: .25px; }
.allsep { margin-left: auto; margin-right: 16px; height: 15px; }
.b3 { width: 112px; }

.banner { height: 157px; flex: none; position: relative; display: flex; flex-direction: column; justify-content: flex-end; }
.art { position: absolute; left: 0; top: 0; }
.menu { position: relative; height: 31px; display: flex; justify-content: space-between; font-size: 12px; font-weight: 700; color: #111; }
.mtab { width: 74px; height: 31px; margin-left: 903px; border: 1px solid #1c4f86; border-bottom: 0; border-radius: 5px 5px 0 0; background: #fff; padding: 7px 0 0 12px; line-height: 14px; }
.mlinks { display: flex; font-size: 11px; line-height: 14px; padding-top: 15px; width: 224px; }
.mlinks i { color: #8a4a12; font-weight: 400; margin: 0 12px 0 9px; }

.page { flex: 1; display: flex; min-height: 0; }
.left { width: 189px; flex: none; display: flex; flex-direction: column; }
.nav-list { margin: 15px 4px 0 4px; width: 181px; background: #f1f3f5; }
.nitem { height: 22px; background: #104068; color: #fff; font-size: 12px; font-weight: 700; display: flex; align-items: center; margin-bottom: 12px; padding-left: 4px; line-height: 14px; }
.nitem.open { background: #1b4f82; margin-bottom: 0; }
.nitem.tall { height: 37px; }
.nitem.last { margin-bottom: 0; }
.arr { width: 16px; flex: none; }
.arr::before { content: ""; display: block; width: 0; height: 0; border: 5px solid transparent; border-left: 6px solid #c9ccd0; border-right: 0; }
.arr.down::before { margin-left: -1px; border: 5px solid transparent; border-top: 6px solid #c9ccd0; border-bottom: 0; }
.sub { height: 162px; padding-top: 10px; color: #444; font-size: 12px; }
.srow { height: 20px; display: flex; align-items: center; gap: 7px; white-space: nowrap; }
.new { display: flex; align-items: center; width: 25px; height: 15px; background: #fff; }
.new b { width: 24px; height: 7px; margin-left: 1px; border-radius: 3px; background: #e0474c; color: #ffd92e; font: italic 700 7px/7px "Liberation Sans", sans-serif; text-align: center; transform: skewX(-15deg); }
.hscroll { margin-top: auto; width: 185px; height: 15px; background: #f1f1f1; display: flex; align-items: center; padding: 0 5px; }
.hscroll .al { border: 4px solid transparent; border-right-color: #a3a3a3; border-left: 0; }
.hscroll .thumb { width: 125px; height: 11px; background: #c1c1c1; margin-left: 6px; }
.hscroll .ar { margin-left: auto; border: 4px solid transparent; border-left-color: #505050; border-right: 0; }

.right { flex: 1; display: flex; flex-direction: column; min-width: 0; }
.frame { height: 733px; display: flex; overflow: hidden; }
.content { flex: 1; padding: 8px 0 0 4px; }
.vscroll { width: 15px; background: #f1f1f1; display: flex; flex-direction: column; align-items: center; padding: 5px 0 6px; }
.vscroll .up { border: 4px solid transparent; border-bottom-color: #a3a3a3; border-top: 0; }
.vscroll .thumb { width: 11px; height: 673px; background: #c1c1c1; margin-top: 6px; }
.vscroll .dn { margin-top: auto; border: 4px solid transparent; border-top-color: #505050; border-bottom: 0; }
.foot { display: flex; font-size: 10px; line-height: 12px; color: #1c1c1c; padding-left: 1.500px; }
.f1 { width: 315.500px; }
.f2 { width: 325px; }

.title { width: 970px; height: 24px; background: #f0f2f2; text-align: center; font-size: 11px; font-weight: 700; line-height: 12px; color: #3d3d3d; }
.info { margin: 5px 0 0 5px; display: grid; grid-template-columns: 90px 120px 100px 150px 69px 150px; grid-auto-rows: 12px; gap: 2px; font-size: 11px; line-height: 12px; color: #444; white-space: nowrap; }
.info > * { background: #f0f2f2; padding-left: 3px; }
.info b { color: #3a3a3a; }
.span3 { grid-column: span 3; }
.rest { grid-column: span 4; margin: -1px -1px; }

.pay { margin: 8px 0 0 5px; display: grid; grid-template-columns: 152px 45px 45px 45px 44px 54px 53px 53px 53px 53px 54px 53px 53px 57px 64px 58px; grid-auto-rows: 12px; grid-template-rows: 12px 48px; gap: 2px; line-height: 12px; }
.h { background: #3068dc; color: #fff; font-size: 11px; font-weight: 700; text-align: center; white-space: nowrap; line-height: 12px; }
.h.pl { padding-left: 3px; }
.lab { background: #f0f2f2; font-size: 11px; color: #444; padding-left: 3px; white-space: nowrap; line-height: 12px; }
.lab.bold { font-weight: 700; color: #3a3a3a; }
.lab.mid { line-height: 48px; }
.mon { background: #f0f2f2; font-size: 10px; text-align: center; line-height: 49px; color: #111; }
.cap { background: #f0f2f2; font-size: 11px; color: #555; display: flex; align-items: center; text-align: center; justify-content: center; }
.num { background: #f0f2f2; font-size: 10px; line-height: 13px; text-align: right; color: #111; }
.num.e { background: #f1f3f5; }
u { color: #551a8b; }
.full { grid-column: 1 / -1; }

.lower { display: flex; align-items: flex-start; margin: 8px 0 0 5px; }
.tax { margin-top: 2px; display: grid; grid-template-columns: 349px 45px; grid-auto-rows: 12px; gap: 2px; width: 396px; }
.know { margin-left: 60px; width: 310px; font-size: 11px; font-weight: 700; line-height: 12px; }
.kh { height: 13px; background: #3068dc; border: 1px solid #1b4f82; border-bottom: 0; color: #fff; text-align: center; }
.kb { margin: 0 1px; background: #f0f2f2; }
.kb div { height: 25px; display: flex; align-items: center; }
.kb a { color: #551a8b; text-decoration: underline; width: 290px; }
</style>
